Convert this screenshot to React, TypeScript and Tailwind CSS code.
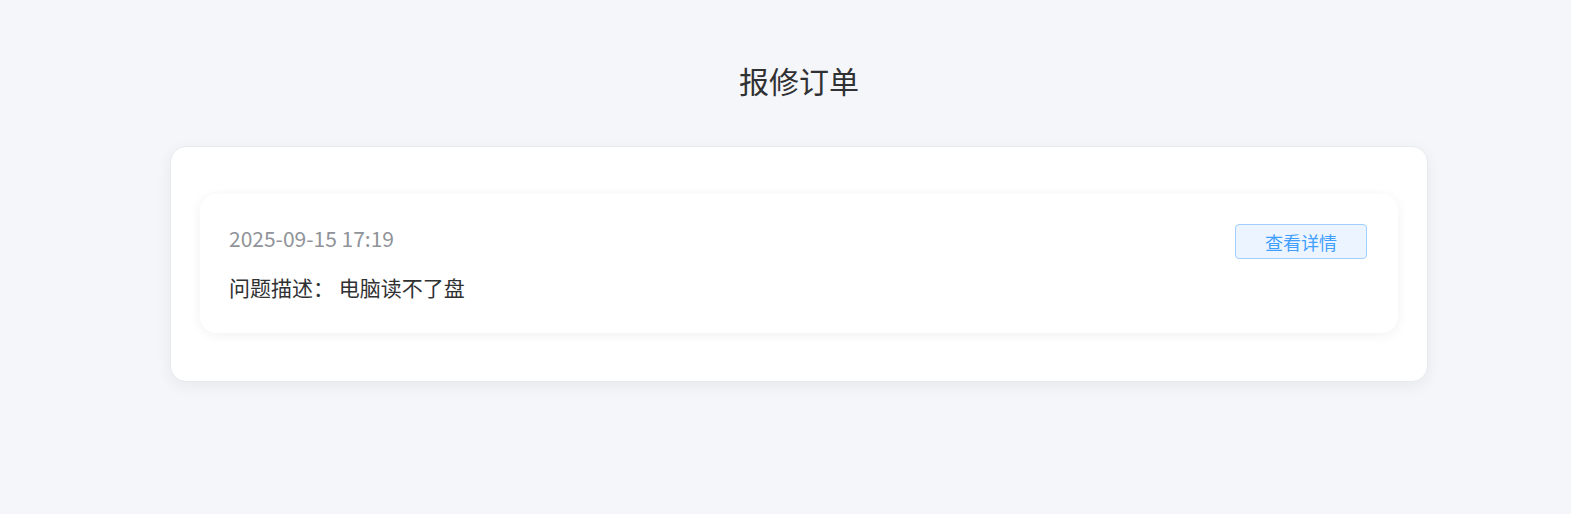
import React from 'react';

const OrderItem = ({ time, desc }: { time: string; desc: string }) => (
    <div className="bg-white rounded-2xl shadow-[0_2px_12px_rgba(0,0,0,0.06)] pl-[29px] pr-[31px] pt-[30px] pb-[32px]">
        <div className="flex justify-between items-start mb-[14px]">
            <div className="text-[21px] leading-[28px] text-[#909399]">{time}</div>
            <button className="h-[35px] w-[132px] rounded-[4px] border border-[#a0cfff] bg-[#ecf5ff] text-[#409eff] text-[18px] leading-none">
                查看详情
            </button>
        </div>
        <div className="text-[21px] leading-[28px] text-[#303133]">
            问题描述： {desc}
        </div>
    </div>
);

export default function App() {
    return (
        <div
            className="min-h-[514px] bg-[#f5f6fa] pl-[27px] pt-[60px]"
            style={{ fontFamily: '"Noto Sans CJK SC", "Noto Sans", sans-serif' }}
        >
            <h1 className="text-center text-[30px] leading-[40px] text-[#303133] mb-[46px]">报修订单</h1>
            <div className="flex justify-center">
                <div className="w-[1258px] bg-white rounded-2xl border border-[#e8eaf0] shadow-[0_4px_16px_rgba(0,0,0,0.06)] pl-[29px] pr-[29px] pt-[47px] pb-[48px]">
                    <OrderItem time="2025-09-15 17:19" desc="电脑读不了盘" />
                </div>
            </div>
        </div>
    );
}
